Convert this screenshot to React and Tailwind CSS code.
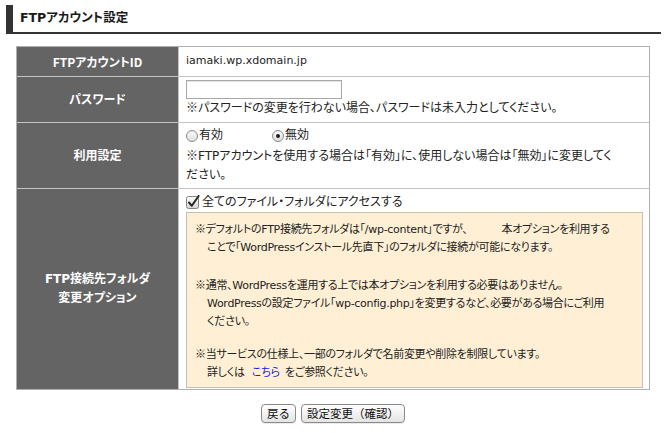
const CJK = "font-['Noto_Sans_CJK_JP',sans-serif]";

function Mark() {
  return <span className={CJK}>※</span>;
}

function Radio({ checked }) {
  return (
    <span className="relative inline-flex w-[12px] h-[12px] rounded-full border border-[#8e8e8e] bg-gradient-to-b from-[#ffffff] to-[#dcdcdc] items-center justify-center shrink-0 shadow-[inset_0_1px_1px_rgba(0,0,0,0.08)]">
      {checked && <span className="w-[4px] h-[4px] rounded-full bg-[#1e1e1e]" />}
    </span>
  );
}

function Checkbox() {
  return (
    <svg width="14" height="14" viewBox="0 0 14 14" className="shrink-0">
      <defs>
        <linearGradient id="cbg" x1="0" y1="0" x2="0" y2="1">
          <stop offset="0" stopColor="#ffffff" />
          <stop offset="1" stopColor="#d4d4d4" />
        </linearGradient>
      </defs>
      <rect x="0.5" y="1.5" width="12" height="12" rx="2" fill="url(#cbg)" stroke="#858585" />
      <path d="M3 7.5 L5.8 10.8 L12.6 1" fill="none" stroke="#262626" strokeWidth="2" strokeLinecap="round" strokeLinejoin="round" />
    </svg>
  );
}

export default function App() {
  return (
    <div className="w-[672px] h-[433px] bg-white text-[#222] font-['DejaVu_Sans','Noto_Sans_CJK_JP',sans-serif] text-[12px] [font-feature-settings:'palt'] pt-[5px]">
      {/* header */}
      <div className="ml-[6px] w-[655px] flex h-[29px]">
        <div className="w-[7px] bg-[#333]" />
        <div className="flex-1 border-b-2 border-[#333] pl-[7px] flex items-center font-bold text-[12.5px] text-[#1a1a1a]">
          FTPアカウント設定
        </div>
      </div>

      {/* table */}
      <div className="mt-[12px] ml-[16px] w-[634px] border border-[#b0b0b0] bg-[#c4c4c4] grid grid-cols-[161px_1fr] grid-rows-[29px_45px_65px_200px] gap-[1px]">
        <div className="bg-[#646464] text-white font-bold flex items-center justify-center font-['Noto_Sans_CJK_JP',sans-serif]">FTPアカウントID</div>
        <div className="bg-white flex items-center pl-[7px] text-[11px]">iamaki.wp.xdomain.jp</div>

        <div className="bg-[#646464] text-white font-bold flex items-center justify-center">パスワード</div>
        <div className="bg-white pl-[7px] pt-[3px]">
          <div className="w-[156px] h-[19px] border border-[#a8a8a8] bg-white shadow-[inset_0_1px_1px_rgba(0,0,0,0.12)]" />
          <div className="leading-[16px] whitespace-nowrap">
            <Mark />パスワードの変更を行わない場合、パスワードは未入力としてください。
          </div>
        </div>

        <div className="bg-[#646464] text-white font-bold flex items-center justify-center">利用設定</div>
        <div className="bg-white pl-[7px] pt-[3px] leading-[19px]">
          <div className="flex items-center h-[19px]">
            <div className="flex items-center w-[86px]">
              <Radio />
              <span className="ml-[1px]">有効</span>
            </div>
            <div className="flex items-center">
              <Radio checked />
              <span className="ml-[1px]">無効</span>
            </div>
          </div>
          <div className="whitespace-nowrap"><Mark />FTPアカウントを使用する場合は「有効」に、使用しない場合は「無効」に変更してく</div>
          <div>ださい。</div>
        </div>

        <div className="bg-[#646464] text-white font-bold flex flex-col items-center justify-center leading-[19px]">
          <div>FTP接続先フォルダ</div>
          <div>変更オプション</div>
        </div>
        <div className="bg-white pl-[7px] pr-[6px] pt-[3px]">
          <div className="flex items-center h-[19px] gap-[2px]">
            <Checkbox />
            <span>全てのファイル・フォルダにアクセスする</span>
          </div>
          <div className="mt-[1px] border border-[#c6c0b4] bg-[#fff0d5] pl-[8px] pt-[6px] pb-[5px] leading-[18px] whitespace-nowrap text-[11px] tracking-[-0.3px]">
            <div>
              <div><Mark />デフォルトのFTP接続先フォルダは「/wp-content」ですが、<span className="inline-block w-[34px]" />本オプションを利用する</div>
              <div className="pl-[12px]">ことで「WordPressインストール先直下」のフォルダに接続が可能になります。</div>
            </div>
            <div className="mt-[18px]">
              <div><Mark />通常、WordPressを運用する上では本オプションを利用する必要はありません。</div>
              <div className="pl-[12px]">WordPressの設定ファイル「wp-config.php」を変更するなど、必要がある場合にご利用</div>
              <div className="pl-[12px]">ください。</div>
            </div>
            <div className="mt-[13px]">
              <div><Mark />当サービスの仕様上、一部のフォルダで名前変更や削除を制限しています。</div>
              <div className="pl-[12px]">詳しくは <span className="inline-block w-[4px]" /><span className="text-[#1a1aee]">こちら</span> <span className="inline-block w-[2px]" />をご参照ください。</div>
            </div>
          </div>
        </div>
      </div>

      {/* buttons */}
      <div className="ml-[16px] w-[634px] mt-[14px] flex justify-center gap-[5px]">
        <button className="h-[19px] px-[5px] rounded-[4px] border border-[#8a8a8a] bg-gradient-to-b from-[#ffffff] to-[#e4e4e4] text-[11.5px] leading-[17px] text-[#111] shadow-[0_1px_0_rgba(0,0,0,0.08)] font-['Noto_Sans_CJK_JP',sans-serif] [font-feature-settings:normal]">戻る</button>
        <button className="h-[19px] px-[5px] rounded-[4px] border border-[#8a8a8a] bg-gradient-to-b from-[#ffffff] to-[#e4e4e4] text-[11.5px] leading-[17px] text-[#111] shadow-[0_1px_0_rgba(0,0,0,0.08)] font-['Noto_Sans_CJK_JP',sans-serif] [font-feature-settings:normal]">設定変更（確認）</button>
      </div>
    </div>
  );
}
